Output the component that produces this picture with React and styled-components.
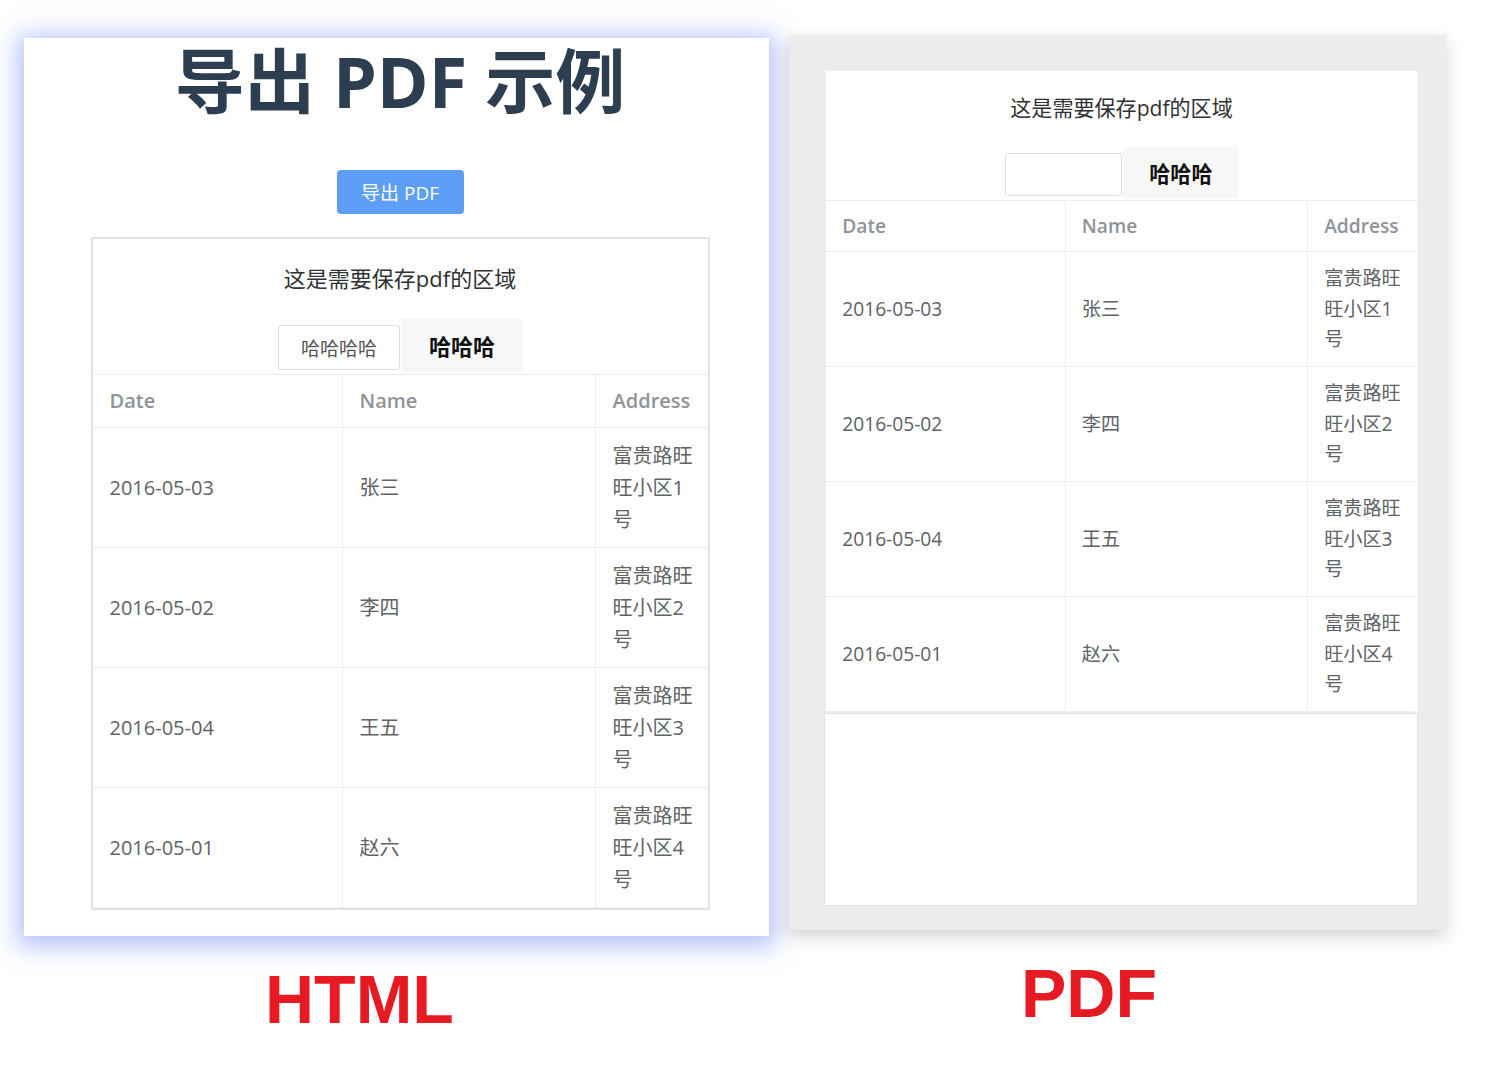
import React from 'react';
import styled, { createGlobalStyle } from 'styled-components';

const GlobalStyle = createGlobalStyle`
  body {
    margin: 0;
    background: #fff;
    font-family: "Open Sans", "Noto Sans CJK SC", sans-serif;
  }
`;

const rows = [
  { date: '2016-05-03', name: '张三', address: '富贵路旺旺小区1号' },
  { date: '2016-05-02', name: '李四', address: '富贵路旺旺小区2号' },
  { date: '2016-05-04', name: '王五', address: '富贵路旺旺小区3号' },
  { date: '2016-05-01', name: '赵六', address: '富贵路旺旺小区4号' },
];

const Stage = styled.div`
  display: flex;
  align-items: flex-start;
  gap: 20px;
  padding-left: 24px;
`;

const Column = styled.div`
  display: flex;
  flex-direction: column;
  padding-top: ${p => p.$top}px;
`;

const HtmlPanel = styled.div`
  width: 745px;
  height: 898px;
  box-sizing: border-box;
  padding: 8px 0 0 7px;
  background: #fff;
  box-shadow: 0 4px 22px 7px rgba(112, 140, 245, 0.5);
  display: flex;
  flex-direction: column;
  align-items: center;
`;

const Title = styled.h1`
  margin: 0;
  font-size: 70px;
  line-height: 70px;
  font-weight: 700;
  color: #2c3e50;
`;

const ExportButton = styled.button`
  margin-top: 54px;
  width: 127px;
  height: 44px;
  border: none;
  border-radius: 4px;
  background: #5d9ef6;
  color: #fff;
  font-family: inherit;
  font-size: 19px;
  cursor: pointer;
`;

const SaveArea = styled.div`
  width: 619px;
  box-sizing: border-box;
  margin-top: ${p => p.$gap || 0}px;
  border: 2px solid ${p => (p.$pdf ? '#f0f0f0' : '#e3e3e3')};
  background: #fff;
  zoom: ${p => p.$zoom || 1};
`;

const AreaHeading = styled.div`
  padding-top: 24px;
  text-align: center;
  font-size: 22px;
  line-height: 30px;
  color: #303133;
`;

const Tabs = styled.div`
  margin-top: 25px;
  display: flex;
  justify-content: center;
  align-items: flex-end;
  gap: 2px;
  height: 54px;
`;

const PlainTab = styled.div`
  width: 122px;
  height: 45px;
  margin-bottom: 2px;
  box-sizing: border-box;
  border: 1px solid #dcdcdc;
  border-radius: 3px;
  background: #fff;
  display: flex;
  align-items: center;
  justify-content: center;
  font-size: 19px;
  color: ${p => (p.$hidden ? 'transparent' : '#555')};
`;

const ActiveTab = styled.div`
  width: 120px;
  height: 54px;
  background: #f7f7f7;
  display: flex;
  align-items: center;
  justify-content: center;
  font-size: 22px;
  font-weight: 700;
  color: #111;
`;

const Table = styled.div`
  margin-top: 2px;
  border-top: 1px solid #ebeef5;
`;

const Row = styled.div`
  display: grid;
  grid-template-columns: 250px 253px 112px;
`;

const Cell = styled.div`
  box-sizing: border-box;
  height: ${p => (p.$head ? 53 : 120)}px;
  padding: 0 14px 0 17px;
  display: flex;
  align-items: center;
  border-bottom: 1px solid #ebeef5;
  font-size: 20px;
  line-height: 32px;
  color: ${p => (p.$head ? '#909399' : '#606266')};
  font-weight: ${p => (p.$head ? 600 : 400)};

  &:not(:last-child) {
    border-right: 1px solid #ebeef5;
  }
`;

const PdfPanel = styled.div`
  width: 657px;
  height: 895px;
  box-sizing: border-box;
  padding: 35px 30px 0 36px;
  background: #ececec;
  box-shadow: 0 6px 16px rgba(0, 0, 0, 0.18);
`;

const BlankPage = styled.div`
  width: 594px;
  height: 193px;
  margin-left: -1px;
  box-sizing: border-box;
  border: 1px solid #e4e4e4;
  background: #fff;
`;

const Label = styled.div`
  margin-top: 29px;
  padding-left: ${p => p.$indent}px;
  font-family: "Liberation Sans", Arial, sans-serif;
  font-size: 68px;
  line-height: 68px;
  font-weight: 700;
  color: #e61a23;
`;

const ExportRegion = ({ pdf, zoom, gap }) => (
  <SaveArea $pdf={pdf} $zoom={zoom} $gap={gap}>
    <AreaHeading>这是需要保存pdf的区域</AreaHeading>
    <Tabs>
      <PlainTab $hidden={pdf}>哈哈哈哈</PlainTab>
      <ActiveTab>哈哈哈</ActiveTab>
    </Tabs>
    <Table>
      <Row>
        <Cell $head>Date</Cell>
        <Cell $head>Name</Cell>
        <Cell $head>Address</Cell>
      </Row>
      {rows.map(row => (
        <Row key={row.date}>
          <Cell>{row.date}</Cell>
          <Cell>{row.name}</Cell>
          <Cell>{row.address}</Cell>
        </Row>
      ))}
    </Table>
  </SaveArea>
);

const App = () => (
  <>
    <GlobalStyle />
    <Stage>
      <Column $top={38}>
        <HtmlPanel>
          <Title>导出 PDF 示例</Title>
          <ExportButton>导出 PDF</ExportButton>
          <ExportRegion gap={23} />
        </HtmlPanel>
        <Label $indent={241}>HTML</Label>
      </Column>
      <Column $top={35}>
        <PdfPanel>
          <ExportRegion pdf zoom={0.958} />
          <BlankPage />
        </PdfPanel>
        <Label $indent={232}>PDF</Label>
      </Column>
    </Stage>
  </>
);

export default App;
